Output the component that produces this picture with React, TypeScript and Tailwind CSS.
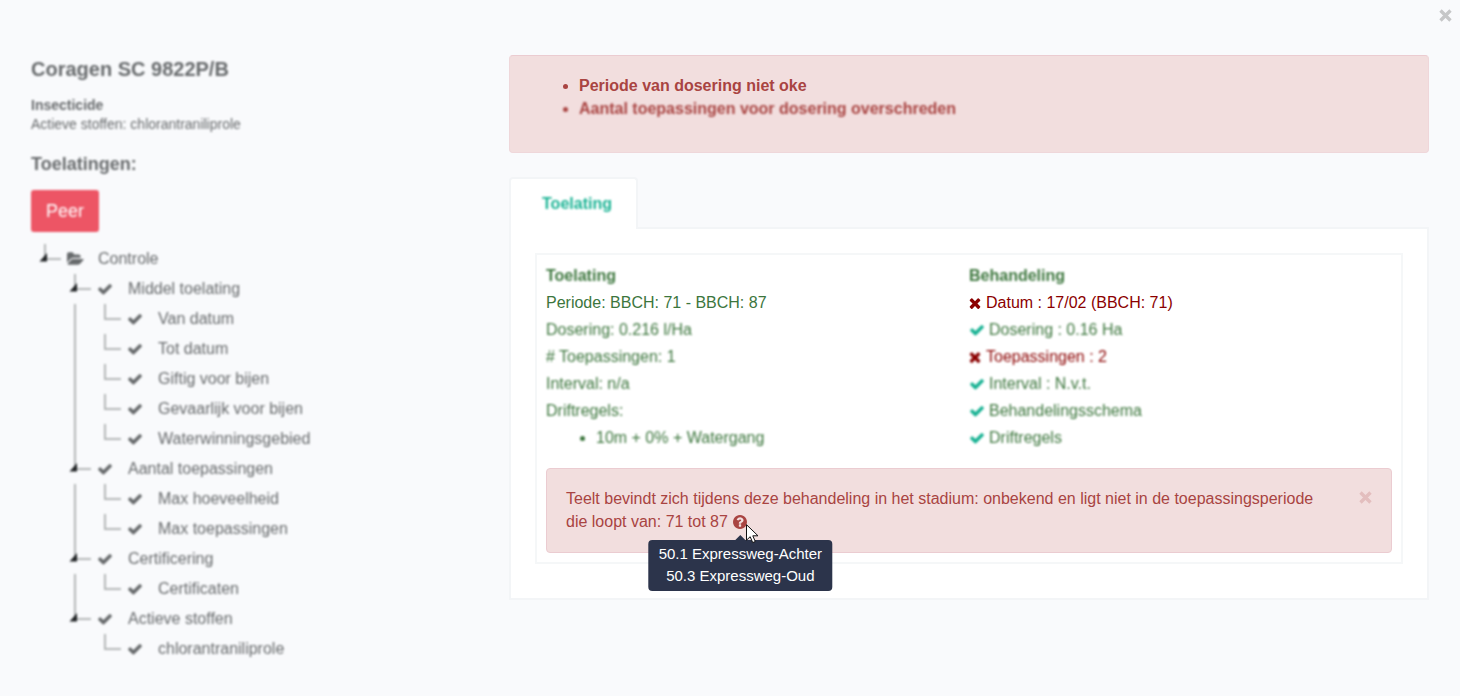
import { ReactNode } from "react";

type Node = { label: string; children?: string[] };

const tree: Node[] = [
  { label: "Middel toelating", children: ["Van datum", "Tot datum", "Giftig voor bijen", "Gevaarlijk voor bijen", "Waterwinningsgebied"] },
  { label: "Aantal toepassingen", children: ["Max hoeveelheid", "Max toepassingen"] },
  { label: "Certificering", children: ["Certificaten"] },
  { label: "Actieve stoffen", children: ["chlorantraniliprole"] },
];

const treatment = [
  { label: "Dosering : 0.16 Ha", ok: true },
  { label: "Toepassingen : 2", ok: false },
  { label: "Interval : N.v.t.", ok: true },
  { label: "Behandelingsschema", ok: true },
  { label: "Driftregels", ok: true },
];

function Check({ className = "" }: { className?: string }) {
  return (
    <svg viewBox="0 0 1792 1792" className={`size-4 fill-current ${className}`} aria-hidden="true">
      <path d="M1671 566q0 40-28 68l-724 724-136 136q-28 28-68 28t-68-28l-136-136-362-362q-28-28-28-68t28-68l136-136q28-28 68-28t68 28l294 295 656-657q28-28 68-28t68 28l136 136q28 28 28 68z" />
    </svg>
  );
}

function Cross() {
  return (
    <svg viewBox="258 0 1276 1792" className="h-4 w-3 fill-current" aria-hidden="true">
      <path d="M1490 1322q0 40-28 68l-136 136q-28 28-68 28t-68-28l-294-294-294 294q-28 28-68 28t-68-28l-136-136q-28-28-28-68t28-68l294-294-294-294q-28-28-28-68t28-68l136-136q28-28 68-28t68 28l294 294 294-294q28-28 68-28t68 28l136 136q28 28 28 68t-28 68l-294 294 294 294q28 28 28 68z" />
    </svg>
  );
}

function CloseMark() {
  return (
    <svg width="13" height="13" viewBox="0 0 13 13" aria-hidden="true">
      <path d="M1.5 1.5L11.5 11.5M11.5 1.5L1.5 11.5" stroke="currentColor" strokeWidth="3.4" />
    </svg>
  );
}

function FolderOpen() {
  return (
    <svg viewBox="0 0 1920 1792" className="h-4 w-[17px] fill-current" aria-hidden="true">
      <path d="M1879 952q0 31-31 66l-336 396q-43 51-120.5 86.5t-143.5 35.5h-1088q-34 0-60.5-13t-26.5-43q0-31 31-66l336-396q43-51 120.5-86.5t143.5-35.5h1088q34 0 60.5 13t26.5 43zm-343-344v160h-832q-94 0-197 47.5t-164 119.5l-337 396-5 6q0-4-.5-12.5t-.5-12.5v-960q0-92 66-158t158-66h320q92 0 158 66t66 158v32h544q92 0 158 66t66 158z" />
    </svg>
  );
}

function QuestionCircle() {
  return (
    <svg viewBox="128 128 1536 1536" className="size-[14px] fill-current" aria-hidden="true">
      <path d="M1024 1376v-192q0-14-9-23t-23-9h-192q-14 0-23 9t-9 23v192q0 14 9 23t23 9h192q14 0 23-9t9-23zm256-672q0-88-55.5-163t-138.5-116-170-41q-243 0-371 213-15 24 8 42l132 100q7 6 19 6 16 0 25-12 53-68 86-92 34-24 86-24 48 0 85.5 26t37.5 59q0 38-20 61t-68 45q-63 28-115.5 86.5t-52.5 125.5v36q0 14 9 23t23 9h192q14 0 23-9t9-23q0-19 21.5-49.5t54.5-49.5q32-18 49-28.5t46-35 44.5-48 28-60.5 12.5-81zm384 192q0 209-103 385.5t-279.5 279.5-385.5 103-385.5-103-279.5-279.5-103-385.5 103-385.5 279.5-279.5 385.5-103 385.5 103 279.5 279.5 103 385.5z" />
    </svg>
  );
}

function Connector({ open = false }: { open?: boolean }) {
  return (
    <svg width="30" height="30" viewBox="0 0 30 30" className="shrink-0 overflow-visible" aria-hidden="true">
      <path d="M15 0V15H31" fill="none" stroke="#b4b7b8" strokeWidth="2" />
      {open && <path d="M9.500 17.500L17 9V17.500Z" fill="#1f2224" />}
    </svg>
  );
}

function Guide({ visible }: { visible: boolean }) {
  return (
    <svg width="30" height="30" viewBox="0 0 30 30" className="shrink-0" aria-hidden="true">
      {visible && <path d="M15 0V30" stroke="#b4b7b8" strokeWidth="2" />}
    </svg>
  );
}

function Row({ label, icon, open }: { label: string; icon: ReactNode; open?: boolean }) {
  return (
    <div className="flex h-[30px] items-center">
      <Connector open={open} />
      <span className="flex w-[30px] shrink-0 justify-center">{icon}</span>
      <span className="pl-2">{label}</span>
    </div>
  );
}

function ControlTree() {
  return (
    <ul className="mt-3 text-base">
      <li>
        <Row label="Controle" icon={<FolderOpen />} open />
        <ul className="pl-[30px]">
          {tree.map((group, i) => (
            <li key={group.label}>
              <Row label={group.label} icon={<Check />} open />
              <ul>
                {group.children?.map((child) => (
                  <li key={child} className="flex">
                    <Guide visible={i < tree.length - 1} />
                    <Row label={child} icon={<Check />} />
                  </li>
                ))}
              </ul>
            </li>
          ))}
        </ul>
      </li>
    </ul>
  );
}

function Tooltip() {
  return (
    <div role="tooltip" className="absolute top-[25px] left-1/2 -translate-x-1/2 rounded bg-[#2c344b] px-[10px] pt-[3px] pb-1 text-center text-[15px] leading-[22px] whitespace-nowrap text-white">
      <span className="absolute -top-[5px] left-1/2 -translate-x-1/2 border-x-[5px] border-b-[5px] border-x-transparent border-b-[#2c344b]" />
      50.1 Expressweg-Achter
      <br />
      50.3 Expressweg-Oud
    </div>
  );
}

function Pointer() {
  return (
    <svg width="13" height="20" viewBox="0 0 13 20" className="absolute top-[9px] left-[13px] z-10" aria-hidden="true">
      <path d="M.5 .7V16.2L4.2 12.7L6.7 18.6L9.3 17.5L6.8 11.8H12Z" fill="#fff" stroke="#111" strokeWidth="1" />
    </svg>
  );
}

export default function App() {
  return (
    <div className="relative min-h-screen bg-[#f9fafc] font-['Liberation_Sans',Arial,sans-serif] text-base text-[#676a6c]">
      <button aria-label="Sluiten" className="absolute top-[9px] right-2 text-black opacity-20"><CloseMark /></button>

      <div className="grid grid-cols-[449fr_920fr] gap-[30px] pt-[55px] pr-[31px] pb-8 pl-[30px]">
        <aside className="blur-[1px]">
          <div className="pl-px">
            <h3 className="text-xl leading-7 font-bold">Coragen SC 9822P/B</h3>
            <div className="mt-[13px] text-sm leading-[19px]">
              <strong className="block">Insecticide</strong>
              <span>Actieve stoffen: chlorantraniliprole</span>
            </div>
            <h4 className="mt-[18px] text-lg leading-6 font-bold">Toelatingen:</h4>
            <button className="mt-[14px] h-[42px] rounded-[3px] bg-[#ed5565] px-[15px] text-lg font-medium text-white">Peer</button>
          </div>
          <ControlTree />
        </aside>

        <main>
          <div className="rounded border border-[#efd7da] border-t-[#ebccd1] bg-[#f2dede] pt-[18px] pb-8 pl-[69px] leading-[23px] font-bold text-[#a94442]">
            <ul className="list-disc">
              <li>Periode van dosering niet oke</li>
              <li className="blur-[1px]">Aantal toepassingen voor dosering overschreden</li>
            </ul>
          </div>

          <div role="tablist" className="mt-6 flex">
            <button role="tab" aria-selected="true" className="relative z-10 -mb-[2px] h-[52px] w-[129px] rounded-t border-2 border-b-0 border-[#f3f5f7] bg-white pl-[7px] font-bold text-[#1ab394]">
              <span className="block blur-[1px]">Toelating</span>
            </button>
          </div>

          <section role="tabpanel" className="border-2 border-[#f3f5f7] bg-white px-6 pt-6 pb-[34px] text-[#3c763d]">
            <div className="border-2 border-[#f5f7f8] px-[9px] pt-[7px] pb-[9px]">
              <div className="grid grid-cols-2 leading-[27px]">
                <div>
                  <h5 className="font-bold blur-[1px]">Toelating</h5>
                  <p>Periode: BBCH: 71 - BBCH: 87</p>
                  <div className="blur-[1px]">
                    <p>Dosering: 0.216 l/Ha</p>
                    <p># Toepassingen: 1</p>
                    <p>Interval: n/a</p>
                    <p>Driftregels:</p>
                    <ul className="list-disc pl-[50px]">
                      <li>10m + 0% + Watergang</li>
                    </ul>
                  </div>
                </div>
                <div>
                  <h5 className="font-bold blur-[1px]">Behandeling</h5>
                  <p className="flex items-center gap-[5px] text-[#8b0000]"><Cross />Datum : 17/02 (BBCH: 71)</p>
                  <div className="blur-[1px]">
                    {treatment.map((t) => (
                      <p key={t.label} className={t.ok ? "flex items-center gap-1" : "flex items-center gap-[5px] text-[#8b0000]"}>
                        {t.ok ? <Check className="text-[#1ab394]" /> : <Cross />}
                        {t.label}
                      </p>
                    ))}
                  </div>
                </div>
              </div>

              <div className="mt-[17px] flex items-start rounded border border-[#ebccd1] bg-[#f2dede] px-[19px] pt-[18px] pb-[19px] leading-[23px] text-[#a94442]">
                <p className="grow pr-7">
                  Teelt bevindt zich tijdens deze behandeling in het stadium: onbekend en ligt niet in de toepassingsperiode die loopt van: 71 tot 87{" "}
                  <span className="relative ml-px inline-block align-[-2px]">
                    <QuestionCircle />
                    <Tooltip />
                    <Pointer />
                  </span>
                </p>
                <button aria-label="Melding sluiten" className="mt-1 text-[#a94442] opacity-20"><CloseMark /></button>
              </div>
            </div>
          </section>
        </main>
      </div>
    </div>
  );
}
